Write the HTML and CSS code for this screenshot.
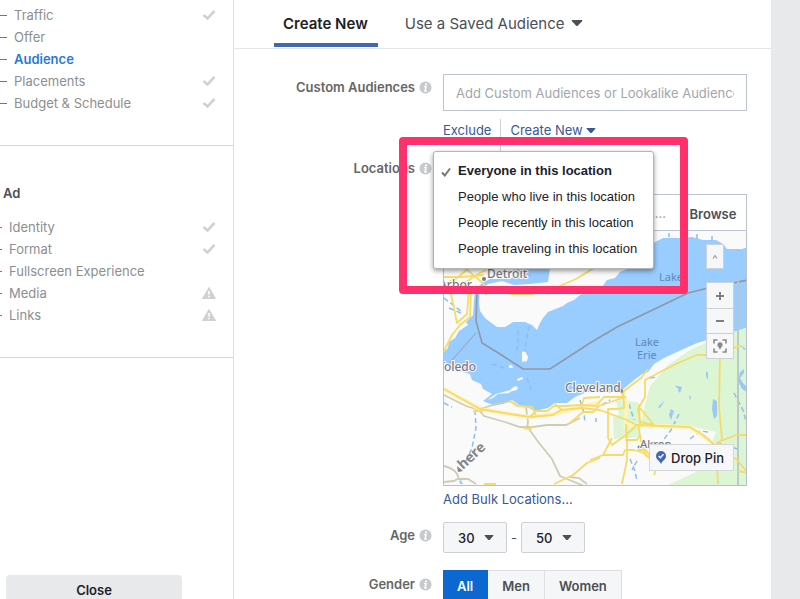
FILE: index.html
```html
<!DOCTYPE html>
<html lang="en">
<head>
<meta charset="utf-8">
<meta name="viewport" content="width=device-width, initial-scale=1">
<title>Audience</title>
<link rel="stylesheet" href="styles.css">
</head>
<body>
<svg class="sprite" aria-hidden="true">
  <symbol id="check" viewBox="0 0 14 12"><path d="M1.500 6 5.500 9.500 12.500 2" fill="none" stroke="#d0d1d3" stroke-width="2.600"/></symbol>
  <symbol id="warn" viewBox="0 0 14 12"><path d="M7 .5 13.500 11.500H.5Z" fill="#d0d1d3" stroke="#d0d1d3" stroke-linejoin="round"/><path d="M7 4v3.500M7 8.800v1.500" stroke="#fff" stroke-width="1.600"/></symbol>
  <symbol id="info" viewBox="0 0 14 14"><circle cx="7" cy="7" r="6.500" fill="#c6c9ce"/><path d="M5.500 6h2L6.500 10.800h2" fill="none" stroke="#fff" stroke-width="1.600"/><circle cx="7.700" cy="3.500" r="1.100" fill="#fff"/></symbol>
  <symbol id="caret" viewBox="0 0 12 8"><path d="M1.500 1h9Q12 1 11 2.200L7 6.600Q6 7.600 5 6.600L1 2.200Q0 1 1.500 1Z" fill="currentColor"/></symbol>
</svg>
<div class="app">
  <nav class="sidebar" aria-label="Steps">
    <section class="group">
      <ul class="steps">
        <li><a href="#traffic">Traffic</a><svg class="status"><use href="#check"/></svg></li>
        <li><a href="#offer">Offer</a></li>
        <li><a class="current" href="#audience">Audience</a></li>
        <li><a href="#placements">Placements</a><svg class="status"><use href="#check"/></svg></li>
        <li><a href="#budget">Budget &amp; Schedule</a><svg class="status"><use href="#check"/></svg></li>
      </ul>
    </section>
    <section class="group group-ad">
      <h2>Ad</h2>
      <ul class="steps">
        <li><a href="#identity">Identity</a><svg class="status"><use href="#check"/></svg></li>
        <li><a href="#format">Format</a><svg class="status"><use href="#check"/></svg></li>
        <li><a href="#fullscreen">Fullscreen Experience</a></li>
        <li><a href="#media">Media</a><svg class="status"><use href="#warn"/></svg></li>
        <li><a href="#links">Links</a><svg class="status"><use href="#warn"/></svg></li>
      </ul>
    </section>
    <button class="close" type="button">Close</button>
  </nav>

  <main class="panel">
    <div class="tabs">
      <button class="tab active" type="button">Create New</button>
      <button class="tab" type="button">Use a Saved Audience <svg class="caret"><use href="#caret"/></svg></button>
    </div>

    <form class="form">
      <div class="row row-custom">
        <div class="label"><label for="custom">Custom Audiences</label><svg class="info"><use href="#info"/></svg></div>
        <div class="field">
          <input class="text" id="custom" type="text" placeholder="Add Custom Audiences or Lookalike Audiences">
          <div class="links">
            <a href="#exclude">Exclude</a>
            <a href="#create">Create New <svg class="caret small"><use href="#caret"/></svg></a>
          </div>
        </div>
      </div>

      <div class="row row-locations">
        <div class="label"><label for="location">Locations</label><svg class="info"><use href="#info"/></svg></div>
        <div class="field">
          <div class="search">
            <input id="location" type="text" placeholder="Add a location...">
            <button type="button">Browse</button>
          </div>
          <div class="map">
            <svg class="map-art" viewBox="444 231 302 254" preserveAspectRatio="xMidYMid slice" role="img" aria-label="Map of Lake Erie">
              <rect x="444" y="231" width="303" height="254" fill="#fafafa"/>
              <g fill="#dcf5d4">
                <path d="M748 327 718 337 690 350 668 365 650 386 645 405 641 422 665 429 690 426 716 432 711 444 735 448 733 470 700 470 668 485H748Z"/>
                <path d="M613 417 628 411 642 421 639 437 614 439Z"/>
                <path d="M616 400 638 402 637 423 620 420Z"/>
              </g>
              <path fill="#fafafa" d="m672 431 18-4 4 5-22 7Z"/>
              <g fill="#99ccff">
                <path d="M475 290 474 300 473 315 466 322 468 325 459 331 455 338 449 342 448 348 443 353V363L450 365 457 370 470 374 472 380 481 384 483 389 492 394 483 401 493 405 503 404 512 400 519 405 527 407 535 411 548 408 555 403 567 403 575 397 587 392 597 392 610 393 622 390 633 381 642 374 648 372 654 364 664 358 677 352 697 343 707 340 722 333 733 332 748 327V247L742 249H727L723 244 716 240 703 240 692 237 680 238 663 238 655 242 648 254 638 260 636 266 630 268 620 272 615 278 607 280 602 287 593 290 580 295 574 300 567 303 563 306 548 312 543 318 540 323 537 330 532 325 525 322 513 322 505 327 497 327 490 322 485 318 480 311 479 302 480 290 488 284 502 281 514 285 530 284 548 282 550 268H516L518 276 507 279 490 279 482 283Z"/>
                <path d="m459 481 1 3h3l-2-4Z"/>
              </g>
              <g fill="#fafafa">
                <path d="m487 400 9-6 14-4 5-4 3 1-1 3-8 2 1 1-12 1-5 4Z"/>
                <path d="m522 352 3-1 3 6-1 4-5 1Z"/>
                <path d="m472 390 10 2-2 3-10-1ZM509 365l3 0 1 3-4 0ZM517 379l5-2 1 2-5 2Z"/>
                <path d="m651 372 8-8 3 1-9 8Z"/>
              </g>
              <g fill="none" stroke="#8cbfee" stroke-width="1.500" stroke-dasharray="5 3">
                <path d="m475 410 1 18-4 20-7 15M444 403l8 4M444 298l18 14M513 270l18 6M449 308l14 6M518 330v14l-2 9M529 326l-3 16-1 10"/>
                <path d="m580 400 4 13 1 10M629 404l5 16M679 414l-8 16-9 12-6 9M630 459l5 12 2 11M637 461l-5 9M734 393l9 17 4 15M676 386l6 4M650 378l8-1M708 432l-8-1-10 8M738 449l-22-6M596 418v4M602 405l8-5"/>
                <path d="M697 234v6M712 236v7M669 233v4M492 364l12 4M527 378l4 12"/>
              </g>
              <g fill="#9bc9f5">
                <path d="m740 372 4-3v4l-4 5 3 5 4 4v5l-5-3-4-8Z"/>
                <path d="m713 399 4 2v15l-3 3-2-10ZM671 409l3 2-3 9-2-5ZM679 386l3 1-2 6-2-2ZM706 371l2 2v7l-2-4ZM665 400l-5 8-2-1Z"/>
                <path d="m741 345 5 4-2 1ZM689 395l2 2-1 4Z"/>
              </g>
              <g fill="none" stroke="#cdcdb4" stroke-width="1.800">
                <path d="M444 395 466 406 479 410 484 416 505 422 520 427 533 427 547 425 566 425 580 418"/>
                <path d="M444 466q13 3 15 13h9l8 5M444 482l10-1 5-3M529 429l10 14 13 16 8 17 7 3 17 7"/>
                <path d="m480 409 13-4 17-4 8 5M526 407l2 15-1 7M570 477l9 1 8 6"/>
              </g>
              <g fill="none" stroke="#8f98a5" stroke-width="1.600">
                <path d="M477 290 476 321 482 343 500 354 523 369 550 369 590 343 617 327 688 293 712 287 748 280"/>
                <path stroke="#9bb0c7" stroke-width="1.200" d="m444 369 32-36"/>
                <path stroke="#b7c5c8" stroke-width="1.800" d="M738 280V485"/>
              </g>
              <g fill="none" stroke="#fff3bd" stroke-width="4">
                <path d="M444 389 480 409 530 417 560 413 581 407 600 402"/>
                <path d="M622 391 627 405 625 425 637 425 690 427 713 443"/>
              </g>
              <g fill="none" stroke="#f6db68" stroke-width="1.800" stroke-linejoin="round">
                <path d="M444 389 480 409 510 414 530 417 553 415 561 410 581 408 600 410 627 420 636 425 690 427 703 435 716 446 736 459 748 473"/>
                <path d="M473 411h9l1-4M510 401l7 5 15 1 4 8M530 417l6-6 11 0 7-5 11 0 16-1 15 1 8-9h22M581 408l3-10 16-1M555 404l7 6M570 423l13-11 10 0 6-6 23-8 2-7 17-13 7-9M640 424l-2-15 7-12v-17l17-9 16-8 19-8h12l10-4 23-5"/>
                <path d="m622 391 2 12v5l-8 1h-8v29l4 7 14-10 10-9M626 424l1 16 0 20-5 24M638 424l3 17 5 15M590 460l13-5h20l2-5h9l10 3 13 13-3 9M554 484l19-9 14-12 13-5M603 455l9-17M639 404l1 18 13 3M640 408l14 17M720 353l-1 55 3 31-6 8 2 37M716 443l20-8h12M738 471l10 2"/>
                <path d="m523 428 7 1 3-3M484 484h12M625 440h12l3-5M638 450h8l8 13"/>
                <path d="M444 277h18l22-2M444 284l13-6 12-10M460 286l18-12 8-4M465 268l19 16 2 11M444 290l15-2 16 1M450 290l4 18 3 15 10-9 2-25M444 351l8-16 8-10 10-8 1-27M548 294l14-9 14-6 18-11M479 290l14-2 18 6h22l10-3"/>
              </g>
              <g fill="#737c88">
                <circle cx="484" cy="279" r="2"/><circle cx="621" cy="391" r="2"/><circle cx="639" cy="447" r="1.500"/>
              </g>
              <g class="place">
                <text x="487" y="278" font-size="12">Detroit</text>
                <text x="439" y="289" font-size="12">Arbor</text>
                <text x="438" y="371" font-size="12">Toledo</text>
                <text x="565" y="392" font-size="12">Cleveland</text>
                <text x="640" y="448" font-size="11">Akron</text>
              </g>
              <g class="lake">
                <text x="659" y="281" font-size="11">Lake</text>
                <text x="635" y="346" font-size="11">Lake</text>
                <text x="637" y="359" font-size="11">Erie</text>
              </g>
              <path d="m457 466 6 5-5 1Z" fill="#858585"/>
              <text class="brand" transform="translate(463 470) rotate(-43)">here</text>
            </svg>
            <div class="map-tools">
              <button class="collapse" type="button" aria-label="Collapse map"><svg viewBox="0 0 10 8"><path d="m3 5.500 2-3 2 3" fill="none" stroke="#9a9ea5" stroke-width="1.200"/></svg></button>
              <div class="zoom">
                <button type="button" aria-label="Zoom in"><svg viewBox="0 0 14 14"><path d="M7 3v8M3 7h8" stroke="#808080" stroke-width="2"/></svg></button>
                <button type="button" aria-label="Zoom out"><svg viewBox="0 0 14 14"><path d="M3 7h8" stroke="#808080" stroke-width="2"/></svg></button>
                <button type="button" aria-label="Center on pin"><svg viewBox="0 0 14 14"><path d="M1 4.500V1H4.500M9.500 1H13V4.500M13 9.500V13H9.500M4.500 13H1V9.500" fill="none" stroke="#8a8a8a" stroke-width="1.600"/><path d="M7 3.200a2.600 2.600 0 0 1 2.600 2.600C9.600 7.600 7.900 8.200 7 10.800 6.100 8.200 4.400 7.600 4.400 5.800A2.600 2.600 0 0 1 7 3.200Z" fill="#8a8a8a"/></svg></button>
              </div>
            </div>
            <button class="drop" type="button"><svg viewBox="0 0 10 13"><path d="M5 0a5 5 0 0 1 5 5C10 8.500 6.500 9.500 5 13 3.500 9.500 0 8.500 0 5A5 5 0 0 1 5 0Z" fill="#4267b2"/><path d="m2.600 5 1.700 1.800L7.500 3.200" fill="none" stroke="#fff" stroke-width="1.300"/></svg>Drop Pin</button>
          </div>
          <a class="bulk" href="#bulk">Add Bulk Locations...</a>

          <div class="highlight"></div>
          <ul class="menu" role="listbox" aria-label="Location type">
            <li role="option" aria-selected="true"><svg viewBox="0 0 10 10"><path d="M1 5.500 3.800 8.500 9 1.500" fill="none" stroke="#777" stroke-width="2"/></svg>Everyone in this location</li>
            <li role="option">People who live in this location</li>
            <li role="option">People recently in this location</li>
            <li role="option">People traveling in this location</li>
          </ul>
        </div>
      </div>

      <div class="row row-age">
        <div class="label"><label for="age-min">Age</label><svg class="info"><use href="#info"/></svg></div>
        <div class="field ages">
          <span class="select"><select id="age-min"><option>30</option></select><svg class="caret small"><use href="#caret"/></svg></span>
          <span>-</span>
          <span class="select"><select aria-label="Maximum age"><option>50</option></select><svg class="caret small"><use href="#caret"/></svg></span>
        </div>
      </div>

      <div class="row row-gender">
        <div class="label"><span id="gender">Gender</span><svg class="info"><use href="#info"/></svg></div>
        <div class="field segments" role="radiogroup" aria-labelledby="gender">
          <label><input type="radio" name="gender" checked><span>All</span></label>
          <label><input type="radio" name="gender"><span>Men</span></label>
          <label><input type="radio" name="gender"><span>Women</span></label>
        </div>
      </div>
    </form>
  </main>
</div>
</body>
</html>
```
FILE: styles.css
```css
* { box-sizing: border-box; }

body {
  margin: 0;
  font: 13px/22px Inter, "Liberation Sans", sans-serif;
  color: #4b4f56;
  background: #e7e9eb;
}

button, input, select { font: inherit; color: inherit; margin: 0; }
button { cursor: pointer; padding: 0; border: 0; background: none; }
a { color: #365899; text-decoration: none; }
ul { list-style: none; margin: 0; padding: 0; }

.sprite { display: none; }

.app {
  display: grid;
  grid-template-columns: 234px 1fr;
  height: 100vh;
  padding-right: 29px;
  overflow: hidden;
}

/* Sidebar */
.sidebar {
  background: #fff;
  border-right: 1px solid #dddfe2;
}

.group {
  padding: 4px 0 31px;
  border-bottom: 1px solid #d5d6d9;
}

.group-ad { padding-top: 36px; }

.group h2 {
  margin: 0 0 12px 3px;
  font-size: 13px;
  font-weight: 600;
}

.steps li {
  display: flex;
  align-items: center;
  height: 22px;
  padding-right: 17px;
}

.steps li::before {
  content: "";
  width: 7px;
  height: 1px;
  margin-right: 7px;
  background: #777;
}

.group-ad .steps li::before { width: 2px; }

.steps a { color: #8c8e92; }
.steps a.current { color: #2a78dc; font-weight: 600; }

.status {
  width: 14px;
  height: 12px;
  margin-left: auto;
}

.close {
  display: block;
  width: 176px;
  height: 30px;
  margin: 217px 0 0 6px;
  border-radius: 4px;
  background: #e7e9eb;
  color: #1d2129;
  font-weight: 600;
}

/* Main panel */
.panel { background: #fff; min-width: 0; }

.tabs {
  display: flex;
  gap: 18px;
  padding: 0 40px;
  border-bottom: 1px solid #e5e6e9;
}

.tab {
  height: 47px;
  padding: 4px 9px 0;
  margin-bottom: 1px;
  border-bottom: 4px solid transparent;
  font-size: 15px;
}

.tab.active {
  padding: 4px 10px 0 9px;
  border-color: #4267b2;
  color: #1d2129;
  font-weight: 600;
}

.caret { width: 12px; height: 8px; margin-left: 2px; vertical-align: 2px; }
.caret.small { width: 10px; height: 7px; vertical-align: 1px; margin-left: 0; }

.form { padding: 25px 24px 0 0; }

.row {
  display: grid;
  grid-template-columns: 198px minmax(0, 1fr);
  column-gap: 11px;
}

.label {
  display: flex;
  justify-content: flex-end;
  align-items: center;
  gap: 4px;
  height: 26px;
  color: #666;
  font-weight: 600;
}

.info { width: 13px; height: 13px; }

.text {
  display: block;
  width: 100%;
  height: 37px;
  padding: 0 12px;
  border: 1px solid #bdc3d1;
  background: #fff;
}

input::placeholder { color: #a3a6ac; opacity: 1; }

.links {
  display: flex;
  height: 40px;
  padding-top: 8px;
}

.links a + a {
  margin-left: 9px;
  padding-left: 9px;
  border-left: 1px solid #ccd0d9;
}

.row-locations .label { margin-top: 4px; }
.row-locations .field { position: relative; padding-top: 43px; }

.search {
  display: flex;
  height: 37px;
  border: 1px solid #bdc3d1;
}

.search input {
  flex: 1;
  min-width: 0;
  padding: 0;
  border: 0;
  background: none;
  text-align: right;
}

.search button {
  width: 80px;
  padding: 2px 0 0 14px;
  font-weight: 600;
}

.map {
  position: relative;
  border: 1px solid #b8c0cd;
  border-top: 0;
}

.map-art { display: block; width: 100%; }

.place {
  fill: #747a84;
  stroke: #fafafa;
  stroke-width: 2px;
  paint-order: stroke;
  font-family: "Noto Sans", sans-serif;
  font-weight: 500;
}

.lake { fill: #5e88c0; font-family: "Noto Sans", sans-serif; }
.brand { fill: #858585; font: bold 14px "Noto Sans", sans-serif; }

.map-tools {
  position: absolute;
  top: 13px;
  right: 12px;
}

.map-tools button {
  display: grid;
  place-items: center;
  width: 26px;
  height: 25px;
  background: #f6f7f9;
}

.map-tools .collapse {
  width: 18px;
  margin-bottom: 13px;
  border: 1px solid #ced0d4;
}

.collapse svg { width: 10px; }
.zoom svg { width: 14px; }
.zoom { border: 1px solid #ced0d4; }
.zoom button + button { border-top: 1px solid #ced0d4; }

.drop {
  position: absolute;
  right: 12px;
  bottom: 14px;
  display: flex;
  align-items: center;
  gap: 5px;
  height: 27px;
  padding: 0 9px 0 6px;
  border: 1px solid #d5d7da;
  background: #f6f7f9;
  color: #1d2129;
  font-weight: 500;
}

.drop svg { width: 10px; height: 13px; }
.bulk { display: block; margin-top: 2px; }

.highlight {
  position: absolute;
  top: -14px;
  left: -44px;
  width: 289px;
  height: 157px;
  border: 8px solid #ff306c;
  border-radius: 4px;
}

.menu {
  position: absolute;
  top: 0;
  left: -10px;
  width: 221px;
  padding: 6px 0;
  border: 1px solid #b4b4b4;
  border-radius: 3px;
  background: #fff;
  box-shadow: 0 2px 5px rgba(0, 0, 0, .4);
  color: #1d2129;
  font-family: "Liberation Sans", Arial, sans-serif;
}

.menu li {
  position: relative;
  padding-left: 24px;
  line-height: 26px;
}

.menu [aria-selected] { font-weight: 700; }

.menu svg {
  position: absolute;
  left: 7px;
  top: 9px;
  width: 10px;
}

/* Age and gender */
.row-age { margin-top: 12px; }

.ages {
  display: flex;
  align-items: center;
  gap: 4px;
}

.select {
  position: relative;
  display: flex;
  align-items: center;
}

.select select {
  appearance: none;
  width: 64px;
  height: 31px;
  padding: 0 14px;
  border: 1px solid #ced0d4;
  border-radius: 2px;
  background: #f5f6f7;
  color: #1d2129;
  font-weight: 500;
}

.select .caret {
  position: absolute;
  right: 13px;
  pointer-events: none;
}

.row-gender { margin-top: 17px; }
.row-gender .label { height: 28px; }

.segments { display: flex; height: 32px; }
.segments label { display: flex; }

.segments input {
  position: absolute;
  opacity: 0;
}

.segments span {
  padding: 0 14px;
  border: 1px solid #dddfe2;
  border-left: 0;
  background: #f5f6f7;
  font-weight: 600;
  line-height: 30px;
}

.segments input:checked + span {
  border-color: #0a68d0;
  background: #0a68d0;
  color: #fff;
}
```
